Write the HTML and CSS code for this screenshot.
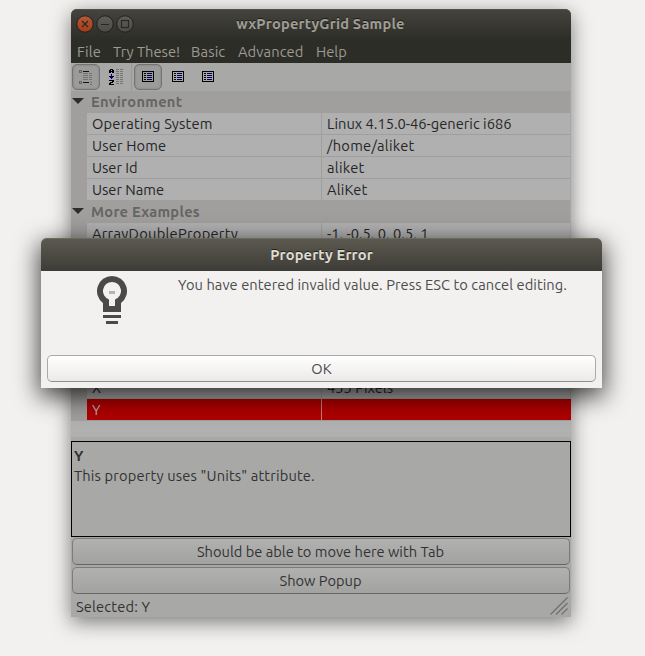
FILE: index.html
```html
<!DOCTYPE html>
<html lang="en">
<head>
<meta charset="utf-8">
<title>wxPropertyGrid Sample</title>
<link rel="stylesheet" href="styles.css">
</head>
<body>
<main class="window">
  <header class="titlebar">
    <svg class="controls" width="58" height="18" viewBox="0 0 58 18">
      <defs>
        <linearGradient id="close" x1="0" y1="0" x2="0" y2="1"><stop offset="0" stop-color="#b5593c"/><stop offset="1" stop-color="#a53c14"/></linearGradient>
        <linearGradient id="plain" x1="0" y1="0" x2="0" y2="1"><stop offset="0" stop-color="#5e5d57"/><stop offset="1" stop-color="#4c4b46"/></linearGradient>
      </defs>
      <g stroke="#22221e">
        <circle cx="9" cy="9" r="8.2" fill="url(#close)"/>
        <circle cx="29" cy="9" r="8.2" fill="url(#plain)"/>
        <circle cx="49" cy="9" r="8.2" fill="url(#plain)"/>
      </g>
      <g stroke="#282823" fill="none" stroke-width="1.2">
        <path d="M6 6l6 6M12 6l-6 6M25 9.5h8"/>
        <rect x="45.5" y="5.5" width="7" height="7"/>
      </g>
    </svg>
    <h1 class="title">wxPropertyGrid Sample</h1>
  </header>
  <nav class="menu">
    <span class="m-file">File</span><span class="m-try">Try These!</span><span class="m-basic">Basic</span><span class="m-adv">Advanced</span><span class="m-help">Help</span>
  </nav>
  <div class="toolbar">
    <span class="tool pressed">
      <svg width="16" height="16" viewBox="0 0 16 16" shape-rendering="crispEdges" fill="none">
        <path stroke="#666" d="M1.500 1.500h2v2h-2zM1.500 12.500h2v2h-2z"/>
        <path stroke="#111" d="M5 2.500h6M5 13.500h6"/>
        <path stroke="#747472" d="M5 4.500h5M11 4.500h3M5 6.500h5M11 6.500h3M5 8.500h5M11 8.500h3M5 10.500h5M11 10.500h3M12 13.500h2M12 15.500h2"/>
      </svg>
    </span>
    <span class="tool">
      <svg width="16" height="16" viewBox="0 0 16 16" shape-rendering="crispEdges" fill="none">
        <path stroke="#000" d="M2 .5h3M1 1.500h2M4 1.500h2M1 2.500h5M1 3.500h2M4 3.500h2M1 11.500h5M4 12.500h2M2 13.500h3M1 14.500h2M1 15.500h5"/>
        <path stroke="#000068" d="M3.500 5v5M1 7.500h5M2 8.500h3"/>
        <path stroke="#747472" d="M8 .5h3M12 .5h3M8 2.500h3M12 2.500h3M8 4.500h3M12 4.500h3M8 6.500h3M12 6.500h3M8 8.500h3M12 8.500h3M8 10.500h3M12 10.500h3M8 12.500h3M12 12.500h3M8 14.500h3M12 14.500h3"/>
      </svg>
    </span>
    <i class="divider"></i>
    <span class="tool pressed"><svg width="12" height="11" viewBox="0 0 12 11" shape-rendering="crispEdges" fill="none"><path stroke="#000" d="M.5.5h11v10H.5zM2 2.500h2M2 4.500h2M2 6.500h2M2 8.500h2"/><path stroke="#000058" d="M5 2.500h5M5 4.500h5M5 6.500h5M5 8.500h5"/></svg></span>
    <span class="tool"><svg width="12" height="11" viewBox="0 0 12 11" shape-rendering="crispEdges" fill="none"><path stroke="#000" d="M.5.5h11v10H.5zM2 2.500h2M2 4.500h2M2 6.500h2M2 8.500h2"/><path stroke="#000058" d="M5 2.500h5M5 4.500h5M5 6.500h5M5 8.500h5"/></svg></span>
    <span class="tool"><svg width="12" height="11" viewBox="0 0 12 11" shape-rendering="crispEdges" fill="none"><path stroke="#000" d="M.5.5h11v10H.5zM2 2.500h2M2 4.500h2M2 6.500h2M2 8.500h2"/><path stroke="#000058" d="M5 2.500h5M5 4.500h5M5 6.500h5M5 8.500h5"/></svg></span>
  </div>
  <section class="grid">
    <h2 class="category"><i class="arrow"></i><span class="loose">Environment</span></h2>
    <div class="row"><span class="name"><b class="wide">Operating System</b></span><span class="value"><b>Linux 4.15.0-46-generic i686</b></span></div>
    <div class="row"><span class="name"><b class="wide">User Home</b></span><span class="value"><b class="loose">/home/aliket</b></span></div>
    <div class="row"><span class="name"><b>User Id</b></span><span class="value"><b class="loose">aliket</b></span></div>
    <div class="row"><span class="name"><b>User Name</b></span><span class="value"><b class="wide">AliKet</b></span></div>
    <h2 class="category"><i class="arrow"></i><span class="loose">More Examples</span></h2>
    <div class="row"><span class="name"><b class="loose">ArrayDoubleProperty</b></span><span class="value"><b>-1, -0.5, 0, 0.5, 1</b></span></div>
    <div class="covered"></div>
    <div class="row"><span class="name"><b>X</b></span><span class="value"><b>455 Pixels</b></span></div>
    <div class="row selected"><span class="name"><b>Y</b></span><span class="value"></span></div>
  </section>
  <section class="help">
    <h3>Y</h3>
    <p><span class="wide">This property uses "Units" attribute.</span></p>
  </section>
  <div class="buttons">
    <button class="btn dim">Should be able to move here with Tab</button>
    <button class="btn dim">Show Popup</button>
  </div>
  <footer class="status">
    <span class="wide">Selected: Y</span>
    <svg width="18" height="18" viewBox="0 0 18 18" stroke="#70706c" stroke-width="1.3"><path d="M.5 17.500l17-17M6 17.500l11.500-11.500M11.500 17.500l6-6"/></svg>
  </footer>
</main>
<section class="dialog">
  <h2 class="dialog-title"><span class="wide">Property Error</span></h2>
  <div class="dialog-body">
    <svg class="bulb" width="30" height="48" viewBox="0 0 30 48">
      <path fill="#4a4a4a" fill-rule="evenodd" d="M15 0a15 15 0 0 1 9 27v9H6v-9A15 15 0 0 1 15 0zM15 6a9 9 0 0 0-3 17.500V30h6v-6.500A9 9 0 0 0 15 6z"/>
      <path fill="#b4b4b2" d="M12 15h6v3h-6z"/>
      <path fill="#4a4a4a" d="M6 39h18v3H6zM9 45h12v3H9z"/>
    </svg>
    <p><span class="message">You have entered invalid value. Press ESC to cancel editing.</span></p>
  </div>
  <button class="btn ok">OK</button>
</section>
</body>
</html>
```
FILE: styles.css
```css
* { box-sizing: border-box; }
html, body { height: 100%; overflow: hidden; }
body {
  margin: 0;
  padding: 9px 74px 0 71px;
  background: #f2f1ef;
  color: #333;
  font: 14.667px/22px Ubuntu, "Noto Sans", sans-serif;
}
h1, h2, h3, p { margin: 0; font-size: inherit; }
b { font-weight: 400; }
span { white-space: nowrap; }
.wide { letter-spacing: .16px; }
.loose { letter-spacing: .27px; }
.message { letter-spacing: .06px; }
.window {
  display: flex;
  flex-direction: column;
  width: 500px;
  height: 608px;
  background: #a8a8a6;
  border-radius: 6px 6px 0 0;
  box-shadow: 0 5px 20px rgba(0, 0, 0, .5);
}
.window > * { flex-shrink: 0; }
.titlebar {
  display: grid;
  grid-template-columns: 68px 1fr 74px;
  align-items: center;
  height: 31px;
  padding: 0 0 1px 5px;
  background: linear-gradient(#45443e, #2d2d28);
  border-radius: 6px 6px 0 0;
  box-shadow: inset 0 1px #504f48;
}
.title { text-align: center; color: #a09e94; letter-spacing: .19px; text-shadow: 0 -1px #1c1c18; white-space: nowrap; }
.menu { display: flex; height: 23px; padding-left: 6px; background: #2d2d28; color: #9c9a92; line-height: 24px; }
.menu span { flex: none; }
.m-file { width: 36px; letter-spacing: .2px; }
.m-try { width: 78px; }
.m-basic { width: 47px; letter-spacing: .15px; }
.m-adv { width: 78px; letter-spacing: .1px; }
.toolbar { display: flex; align-items: center; height: 28px; padding-left: 1px; }
.tool { display: flex; flex: none; align-items: center; justify-content: center; width: 28px; height: 26px; padding-bottom: 1px; margin-right: 2px; }
.pressed { border: 1px solid #747472; border-radius: 5px; background: #9b9b99; box-shadow: inset 0 0 2px #777; }
.divider { width: 1px; height: 28px; margin-right: 2px; margin-left: -1px; background: #999997; }
.grid { width: 500px; height: 346px; padding-bottom: 16px; background: #b0b0b0; }
.category { display: flex; align-items: center; height: 22px; background: #a09f9d; color: #656565; font-weight: 700; border-right: 1px solid #a8a8a6; }
.arrow { width: 12px; height: 6px; margin: -2px 7px 0 1px; background: #2d2d2d; clip-path: polygon(0 0, 100% 0, 50% 100%); }
.row { display: grid; grid-template-columns: 235px 1fr; height: 22px; border-left: 16px solid #a09f9d; border-right: 1px solid #a8a8a6; color: #262626; }
.name, .value { height: 22px; padding-left: 5px; border-bottom: 1px solid #a09f9d; line-height: 22px; overflow: hidden; }
.name { border-right: 1px solid #a09f9d; }
.selected { background: #b00000; color: #b0b0b0; border-right: 0; }
.selected .name { border-right-color: #c08080; }
.covered { height: 132px; border-left: 16px solid #a09f9d; }
.help { height: 96px; margin-top: 4px; padding: 4px 2px; border: 1px solid #000; line-height: 20px; }
.buttons { display: flex; flex-direction: column; gap: 2px; padding: 1px 1px 0; }
.btn {
  height: 27px;
  padding: 0;
  border: 1px solid #aaa;
  border-bottom-color: #8e8e8e;
  border-radius: 5px;
  background: linear-gradient(#fff, #eceae8);
  color: #4c4c4c;
  font: inherit;
  line-height: 24px;
}
.dim { padding-right: 1px; border-color: #7c7c7a #7c7c7a #666664; background: linear-gradient(#b1b1b1, #a2a2a0); color: #333; }
.status { display: flex; justify-content: space-between; align-items: flex-start; padding: 2px 3px 0 5px; }
.status svg { margin-top: 1px; }
.dialog {
  position: absolute;
  top: 238px;
  left: 41px;
  display: flex;
  flex-direction: column;
  width: 561px;
  height: 150px;
  background: #f2f1ef;
  border-radius: 6px 6px 0 0;
  box-shadow: 0 7px 24px 2px rgba(0, 0, 0, .72);
}
.dialog-title {
  height: 33px;
  background: linear-gradient(#5c5a50, #3d3c37);
  border-radius: 6px 6px 0 0;
  box-shadow: inset 0 1px #6c6a60;
  color: #dfdbd2;
  line-height: 34px;
  text-align: center;
  text-shadow: 0 -1px #24241f;
}
.dialog-body { display: flex; flex: 1; padding: 5px 0 0 56px; }
.dialog-body p { margin-left: 51px; line-height: 18px; color: #4c4c4c; }
.ok { margin: 0 6px 6px; }
```
